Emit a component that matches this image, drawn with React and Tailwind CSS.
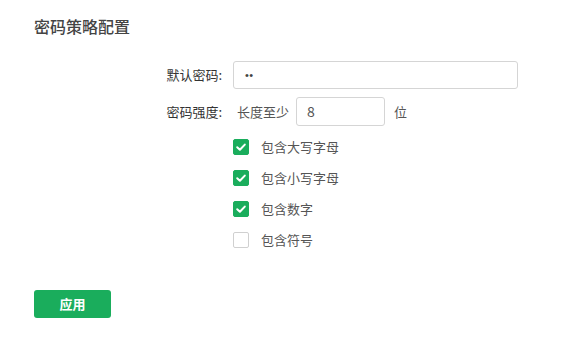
import React, { useState } from "react";

const font = { fontFamily: '"Noto Sans CJK SC", "Noto Sans", sans-serif' };

const CheckIcon = () => (
  <svg width="12" height="12" viewBox="0 0 12 12" fill="none">
    <polyline
      points="2.2 6.2 4.9 8.8 9.8 3.6"
      stroke="white"
      strokeWidth="2"
      strokeLinecap="round"
      strokeLinejoin="round"
    />
  </svg>
);

const Option = ({ label, checked, onToggle }) => (
  <label className="flex h-[31px] cursor-pointer items-center gap-[12px]">
    <span
      onClick={onToggle}
      className={`flex h-4 w-4 items-center justify-center rounded-[2px] border ${
        checked ? "border-[#1aad5c] bg-[#1aad5c]" : "border-[#d0d0d0] bg-white"
      }`}
    >
      {checked && <CheckIcon />}
    </span>
    <span className="text-[13px] text-[#555]">{label}</span>
  </label>
);

export default function App() {
  const [opts, setOpts] = useState({
    upper: true,
    lower: true,
    digit: true,
    symbol: false,
  });
  const toggle = (k) => setOpts({ ...opts, [k]: !opts[k] });

  return (
    <div className="min-h-[341px] w-[585px] bg-white px-[34px] pt-[14px]" style={font}>
      <h2 className="h-6 text-[16px] font-medium leading-6 text-[#444]">密码策略配置</h2>

      <div className="mt-[23px] flex h-[28px] items-center gap-[11px]">
        <span className="w-[188px] text-right text-[13px] text-[#333]">默认密码:</span>
        <div className="flex h-[28px] w-[285px] items-center rounded-[3px] border border-[#d5d5d5] px-[11px] font-['Liberation_Sans',sans-serif] text-[11px] tracking-[0.5px] text-[#444]">
          ••
        </div>
      </div>

      <div className="mt-[8px] flex h-[29px] items-center">
        <span className="w-[188px] text-right text-[13px] text-[#333]">密码强度:</span>
        <span className="ml-[15px] text-[13px] text-[#555]">长度至少</span>
        <div className="ml-[7px] flex h-[29px] w-[89px] items-center rounded-[3px] border border-[#d5d5d5] px-[10px] text-[14px] text-[#555]">
          8
        </div>
        <span className="ml-[9px] text-[13px] text-[#555]">位</span>
      </div>

      <div className="ml-[199px] mt-[5px] flex flex-col">
        <Option label="包含大写字母" checked={opts.upper} onToggle={() => toggle("upper")} />
        <Option label="包含小写字母" checked={opts.lower} onToggle={() => toggle("lower")} />
        <Option label="包含数字" checked={opts.digit} onToggle={() => toggle("digit")} />
        <Option label="包含符号" checked={opts.symbol} onToggle={() => toggle("symbol")} />
      </div>

      <button className="mt-[35px] flex h-[28px] w-[77px] items-center justify-center rounded-[3px] bg-[#1aad5c] text-[13px] font-bold text-white">
        应用
      </button>
    </div>
  );
}
